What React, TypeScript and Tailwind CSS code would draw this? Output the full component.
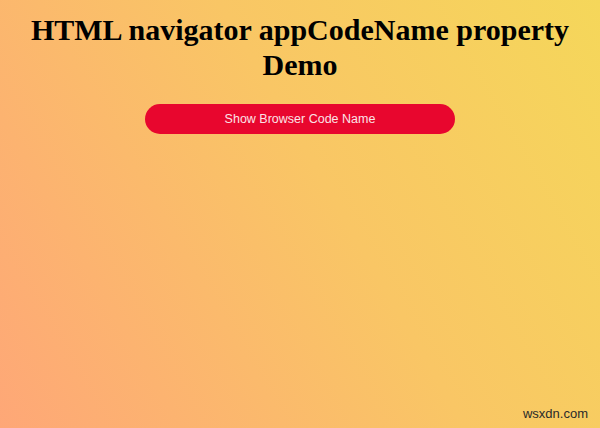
import React from "react";

export default function App() {
  return (
    <div className="relative h-[428px] w-[600px] overflow-hidden bg-[linear-gradient(60deg,#fea777_0%,#f9c665_55%,#f5d75a_100%)]">
      <div className="flex flex-col items-center pt-[12px]">
        <h1 className="text-center font-['Liberation_Serif',serif] text-[30px] font-bold leading-[35px] text-black">
          HTML navigator appCodeName property
          <br />
          Demo
        </h1>
        <button
          type="button"
          className="mt-[22px] h-[30px] w-[310px] rounded-full bg-[#e8062e] font-['Liberation_Sans',sans-serif] text-[12.5px] text-[#fbe3e6]"
        >
          Show Browser Code Name
        </button>
      </div>
      <span className="absolute bottom-[5px] right-[12px] font-['Liberation_Sans',sans-serif] text-[13px] text-[#2a2a2a]">
        wsxdn.com
      </span>
    </div>
  );
}
